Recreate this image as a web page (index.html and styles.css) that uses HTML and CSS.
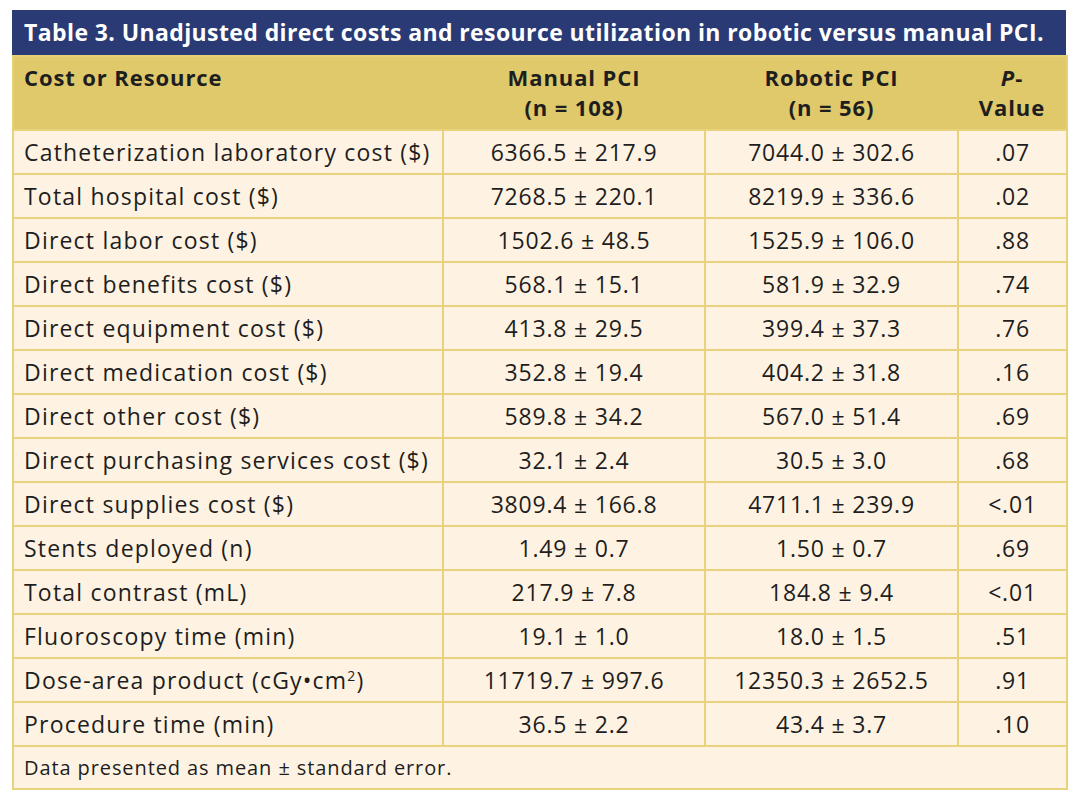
FILE: index.html
```html
<!DOCTYPE html>
<html>
<head>
<meta charset="utf-8">
<link rel="stylesheet" href="styles.css">
</head>
<body>
<div class="wrap">
  <div class="title">Table 3. Unadjusted direct costs and resource utilization in robotic versus manual PCI.</div>
  <table class="data">
    <colgroup>
      <col class="c1"><col class="c2"><col class="c3"><col class="c4">
    </colgroup>
    <thead>
      <tr>
        <th class="left">Cost or Resource</th>
        <th>Manual PCI<br>(n = 108)</th>
        <th>Robotic PCI<br>(n = 56)</th>
        <th><i>P</i>-<br>Value</th>
      </tr>
    </thead>
    <tbody>
      <tr><td class="left">Catheterization laboratory cost ($)</td><td>6366.5 ± 217.9</td><td>7044.0 ± 302.6</td><td>.07</td></tr>
      <tr><td class="left">Total hospital cost ($)</td><td>7268.5 ± 220.1</td><td>8219.9 ± 336.6</td><td>.02</td></tr>
      <tr><td class="left">Direct labor cost ($)</td><td>1502.6 ± 48.5</td><td>1525.9 ± 106.0</td><td>.88</td></tr>
      <tr><td class="left">Direct benefits cost ($)</td><td>568.1 ± 15.1</td><td>581.9 ± 32.9</td><td>.74</td></tr>
      <tr><td class="left">Direct equipment cost ($)</td><td>413.8 ± 29.5</td><td>399.4 ± 37.3</td><td>.76</td></tr>
      <tr><td class="left">Direct medication cost ($)</td><td>352.8 ± 19.4</td><td>404.2 ± 31.8</td><td>.16</td></tr>
      <tr><td class="left">Direct other cost ($)</td><td>589.8 ± 34.2</td><td>567.0 ± 51.4</td><td>.69</td></tr>
      <tr><td class="left">Direct purchasing services cost ($)</td><td>32.1 ± 2.4</td><td>30.5 ± 3.0</td><td>.68</td></tr>
      <tr><td class="left">Direct supplies cost ($)</td><td>3809.4 ± 166.8</td><td>4711.1 ± 239.9</td><td>&lt;.01</td></tr>
      <tr><td class="left">Stents deployed (n)</td><td>1.49 ± 0.7</td><td>1.50 ± 0.7</td><td>.69</td></tr>
      <tr><td class="left">Total contrast (mL)</td><td>217.9 ± 7.8</td><td>184.8 ± 9.4</td><td>&lt;.01</td></tr>
      <tr><td class="left">Fluoroscopy time (min)</td><td>19.1 ± 1.0</td><td>18.0 ± 1.5</td><td>.51</td></tr>
      <tr><td class="left">Dose-area product (cGy•cm<sup>2</sup>)</td><td>11719.7 ± 997.6</td><td>12350.3 ± 2652.5</td><td>.91</td></tr>
      <tr><td class="left">Procedure time (min)</td><td>36.5 ± 2.2</td><td>43.4 ± 3.7</td><td>.10</td></tr>
    </tbody>
    <tfoot>
      <tr><td class="note" colspan="4">Data presented as mean ± standard error.</td></tr>
    </tfoot>
  </table>
</div>
</body>
</html>
```
FILE: styles.css
```css
html, body {
  margin: 0;
  padding: 0;
  background: #ffffff;
}

body {
  font-family: "Open Sans", "Liberation Sans", sans-serif;
  color: #1e1e1e;
}

.wrap {
  width: 1054px;
  margin: 10px 0 0 12px;
}

.title {
  background: #2a3a74;
  color: #ffffff;
  font-weight: 700;
  font-size: 23px;
  height: 45px;
  line-height: 44px;
  padding-left: 12px;
  white-space: nowrap;
  letter-spacing: 0.4px;
  overflow: hidden;
}

.data {
  width: 1054px;
  border-collapse: collapse;
  table-layout: fixed;
  border: 2px solid #e6cf78;
}

.c1 { width: 430px; }
.c2 { width: 262px; }
.c3 { width: 253px; }
.c4 { width: 109px; }

.data th {
  background: #dfc96b;
  font-weight: 700;
  font-size: 22px;
  letter-spacing: 0.9px;
  line-height: 30px;
  height: 74px;
  padding: 5px 4px 4px;
  vertical-align: top;
  text-align: center;
  box-sizing: border-box;
}

.data th i {
  font-style: italic;
}

.data td {
  background: #fef3e2;
  border: 2px solid #e8d27c;
  font-size: 23px;
  letter-spacing: 0.8px;
  height: 44px;
  padding: 0 4px;
  text-align: center;
  vertical-align: middle;
  box-sizing: border-box;
  white-space: nowrap;
}

.data td.left {
  letter-spacing: 1.2px;
}

.data .left {
  text-align: left;
  padding-left: 10px;
}

.data sup {
  font-size: 14px;
  line-height: 0;
  vertical-align: 8px;
}

.data td.note {
  text-align: left;
  padding-left: 10px;
  font-size: 20px;
  letter-spacing: 0.9px;
  height: 43px;
}
```
